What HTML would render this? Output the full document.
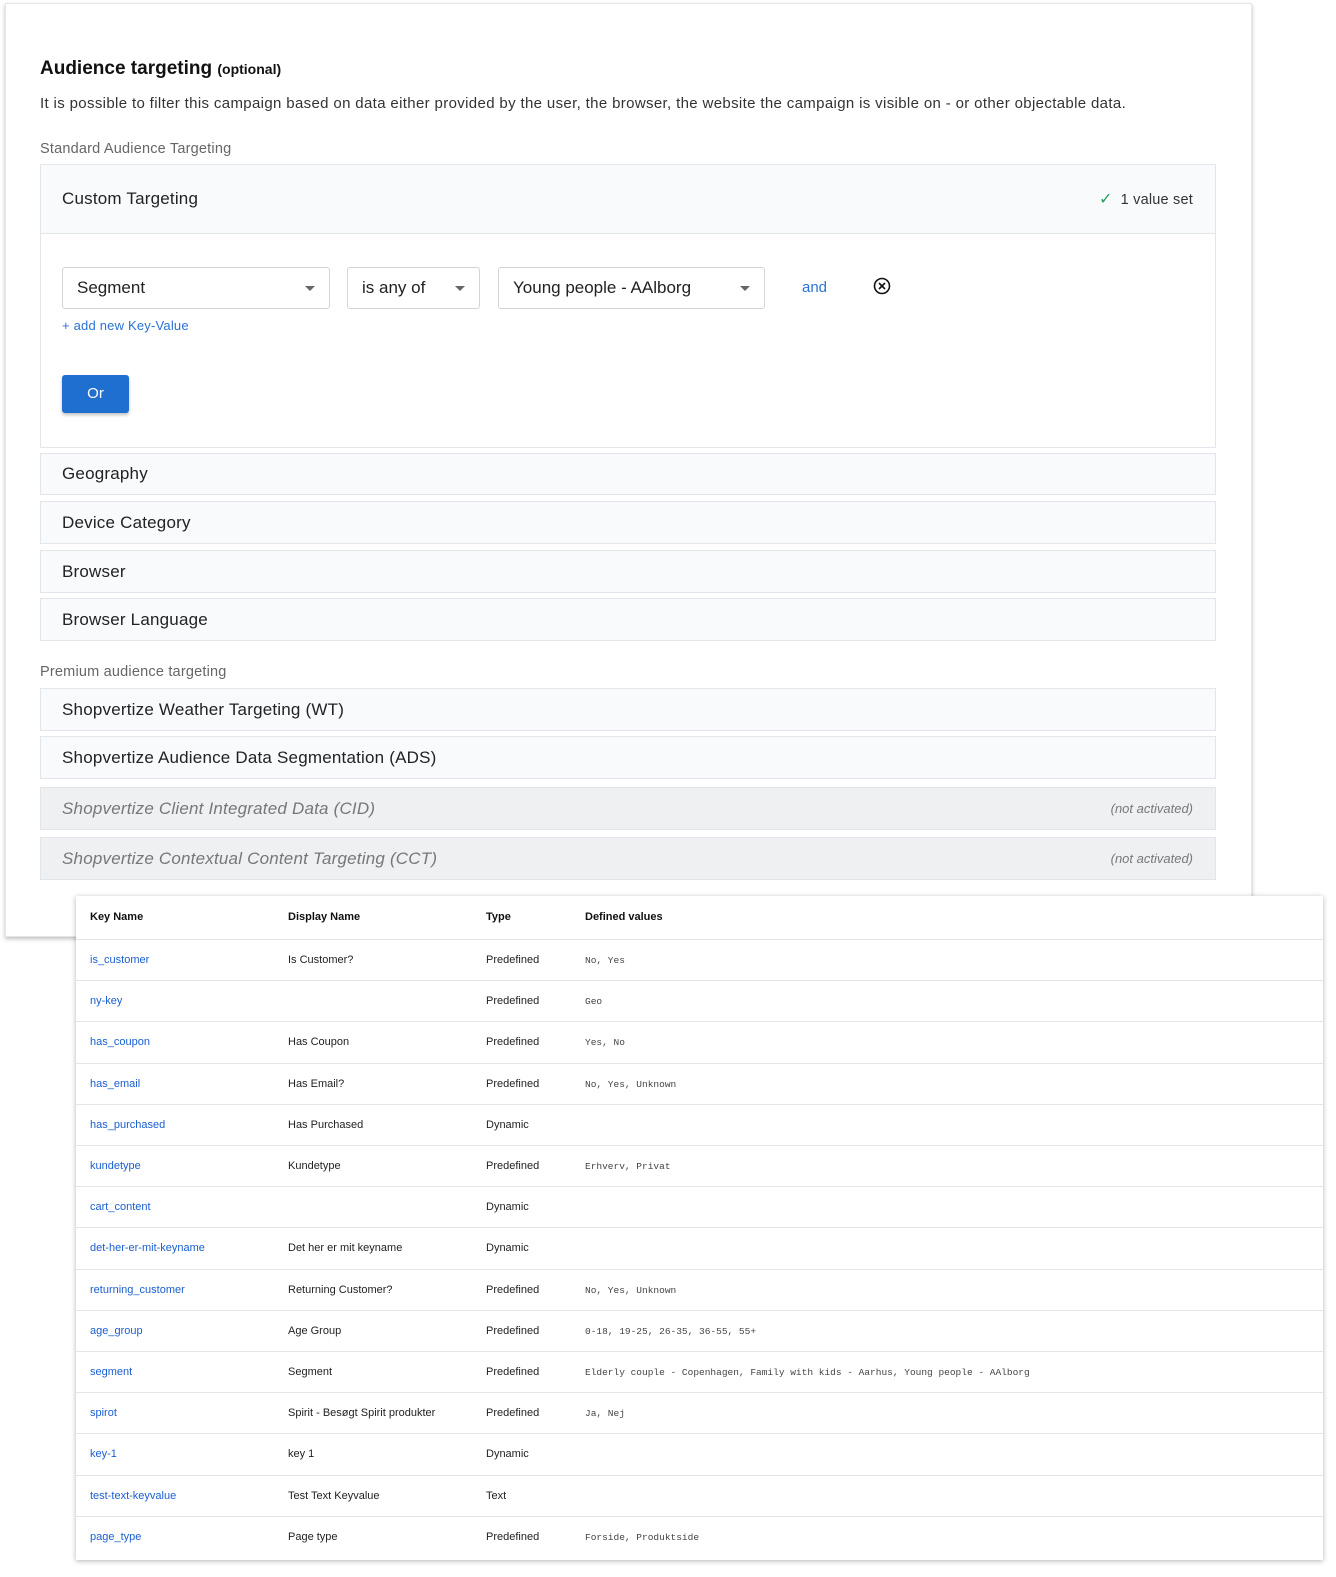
<!DOCTYPE html>
<html><head><meta charset="utf-8"><style>
*{box-sizing:border-box;margin:0;padding:0}
body{width:1336px;height:1577px;background:#fff;font-family:"Liberation Sans",Arial,sans-serif;position:relative;overflow:hidden;color:#222}
.card{position:absolute;left:5px;top:3px;width:1247px;height:934px;background:#fff;border:1px solid #e6e6e6;box-shadow:0 2px 4px rgba(0,0,0,.25)}
.abs{position:absolute}
h1{position:absolute;left:40px;top:58px;font-size:19px;font-weight:bold;color:#111}
h1 small{font-size:14px}
.desc{left:40px;top:95px;font-size:15px;letter-spacing:.35px;color:#333}
.lbl{left:40px;font-size:14.5px;color:#666;letter-spacing:.2px}
.acc{position:absolute;left:40px;width:1176px;background:#f8fafc;border:1px solid #e2e6ea;font-size:17px;letter-spacing:.2px;color:#222;padding-left:21px;display:flex;align-items:center}
.acc.dis{background:#eef0f2;color:#777;font-style:italic}
.acc .na{position:absolute;right:22px;font-size:13px;color:#777;letter-spacing:0}
.sel{position:absolute;top:267px;height:42px;border:1px solid #d5d5d5;border-radius:3px;background:#fff;font-size:17px;padding:10px 14px;color:#222}
.sel:after{content:"";position:absolute;right:14px;top:18px;border:5px solid transparent;border-top:5px solid #666}
.tbl{position:absolute;left:76px;top:896px;width:1247px;height:664px;background:#fff;box-shadow:0 1px 5px rgba(0,0,0,.3);font-size:11px}
.row{position:absolute;left:0;width:100%;height:41px;border-top:1px solid #e5e5e5}
.row span{position:absolute;top:14px}
.c1{left:14px;color:#1a5fd0}.c2{left:212px}.c3{left:410px}.c4{left:509px;font-family:"Liberation Mono",monospace;font-size:9.5px;color:#444;top:15px!important}
.hd span{font-weight:bold;color:#111;top:15px}
</style></head><body>
<div class="card"></div>
<h1>Audience targeting <small>(optional)</small></h1>
<div class="abs desc">It is possible to filter this campaign based on data either provided by the user, the browser, the website the campaign is visible on - or other objectable data.</div>
<div class="abs lbl" style="top:141px">Standard Audience Targeting</div>
<div class="abs" style="left:40px;top:164px;width:1176px;height:284px;border:1px solid #e2e6ea;background:#fff"></div>
<div class="acc" style="top:164px;height:70px">Custom Targeting<span style="position:absolute;right:22px;font-size:14.5px;color:#333"><span style="color:#2a9d5a;font-size:16px;margin-right:8px">✓</span>1 value set</span></div>
<div class="sel" style="left:62px;width:268px">Segment</div>
<div class="sel" style="left:347px;width:133px">is any of</div>
<div class="sel" style="left:498px;width:267px">Young people - AAlborg</div>
<div class="abs" style="left:802px;top:279px;font-size:15px;color:#2a72d6">and</div>
<svg class="abs" style="left:873px;top:277px" width="18" height="18" viewBox="0 0 18 18"><circle cx="9" cy="9" r="7.5" fill="none" stroke="#111" stroke-width="1.6"/><path d="M6 6L12 12M12 6L6 12" stroke="#111" stroke-width="1.6"/></svg>
<div class="abs" style="left:62px;top:318px;font-size:13px;color:#2a72d6;letter-spacing:.2px">+ add new Key-Value</div>
<div class="abs" style="left:62px;top:375px;width:67px;height:38px;background:#1f6fd1;border-radius:3px;color:#fff;font-size:15px;text-align:center;line-height:38px;box-shadow:0 2px 3px rgba(0,0,0,.25)">Or</div>
<div class="acc" style="top:453px;height:42px">Geography</div>
<div class="acc" style="top:501px;height:43px">Device Category</div>
<div class="acc" style="top:550px;height:43px">Browser</div>
<div class="acc" style="top:598px;height:43px">Browser Language</div>
<div class="abs lbl" style="top:664px">Premium audience targeting</div>
<div class="acc" style="top:688px;height:43px">Shopvertize Weather Targeting (WT)</div>
<div class="acc" style="top:736px;height:43px">Shopvertize Audience Data Segmentation (ADS)</div>
<div class="acc dis" style="top:787px;height:43px">Shopvertize Client Integrated Data (CID)<span class="na">(not activated)</span></div>
<div class="acc dis" style="top:837px;height:43px">Shopvertize Contextual Content Targeting (CCT)<span class="na">(not activated)</span></div>
<div class="tbl">
<div class="row hd" style="top:0;border:none;height:44px"><span class="c2" style="left:14px">Key Name</span><span class="c2">Display Name</span><span class="c2" style="left:410px">Type</span><span class="c2" style="left:509px">Defined values</span></div>
<div class="row" style="top:43px"><span class="c1">is_customer</span><span class="c2">Is Customer?</span><span class="c3">Predefined</span><span class="c4">No, Yes</span></div>
<div class="row" style="top:84px"><span class="c1">ny-key</span><span class="c3">Predefined</span><span class="c4">Geo</span></div>
<div class="row" style="top:125px"><span class="c1">has_coupon</span><span class="c2">Has Coupon</span><span class="c3">Predefined</span><span class="c4">Yes, No</span></div>
<div class="row" style="top:167px"><span class="c1">has_email</span><span class="c2">Has Email?</span><span class="c3">Predefined</span><span class="c4">No, Yes, Unknown</span></div>
<div class="row" style="top:208px"><span class="c1">has_purchased</span><span class="c2">Has Purchased</span><span class="c3">Dynamic</span></div>
<div class="row" style="top:249px"><span class="c1">kundetype</span><span class="c2">Kundetype</span><span class="c3">Predefined</span><span class="c4">Erhverv, Privat</span></div>
<div class="row" style="top:290px"><span class="c1">cart_content</span><span class="c3">Dynamic</span></div>
<div class="row" style="top:331px"><span class="c1">det-her-er-mit-keyname</span><span class="c2">Det her er mit keyname</span><span class="c3">Dynamic</span></div>
<div class="row" style="top:373px"><span class="c1">returning_customer</span><span class="c2">Returning Customer?</span><span class="c3">Predefined</span><span class="c4">No, Yes, Unknown</span></div>
<div class="row" style="top:414px"><span class="c1">age_group</span><span class="c2">Age Group</span><span class="c3">Predefined</span><span class="c4">0-18, 19-25, 26-35, 36-55, 55+</span></div>
<div class="row" style="top:455px"><span class="c1">segment</span><span class="c2">Segment</span><span class="c3">Predefined</span><span class="c4">Elderly couple - Copenhagen, Family with kids - Aarhus, Young people - AAlborg</span></div>
<div class="row" style="top:496px"><span class="c1">spirot</span><span class="c2">Spirit - Besøgt Spirit produkter</span><span class="c3">Predefined</span><span class="c4">Ja, Nej</span></div>
<div class="row" style="top:537px"><span class="c1">key-1</span><span class="c2">key 1</span><span class="c3">Dynamic</span></div>
<div class="row" style="top:579px"><span class="c1">test-text-keyvalue</span><span class="c2">Test Text Keyvalue</span><span class="c3">Text</span></div>
<div class="row" style="top:620px"><span class="c1">page_type</span><span class="c2">Page type</span><span class="c3">Predefined</span><span class="c4">Forside, Produktside</span></div>
</div>
</body></html>
